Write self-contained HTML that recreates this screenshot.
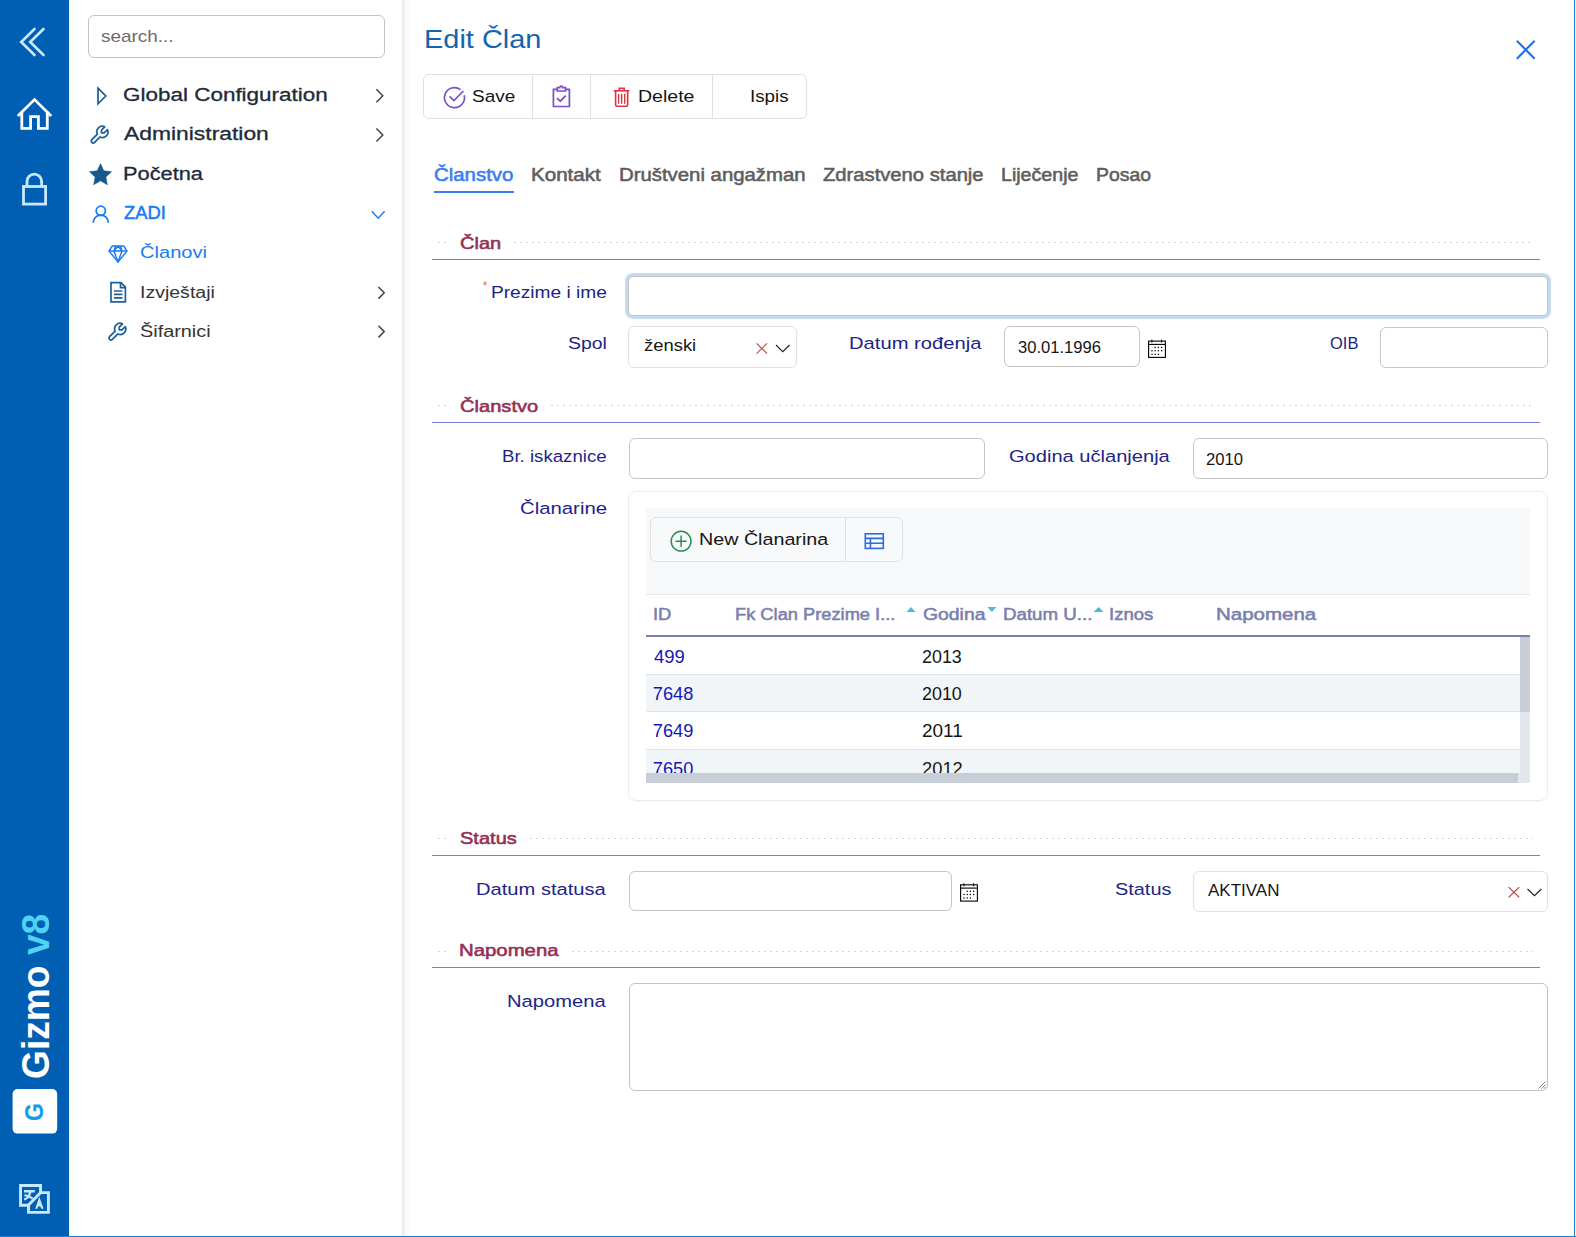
<!DOCTYPE html>
<html><head><meta charset="utf-8"><title>Edit Član</title>
<style>
html,body{margin:0;padding:0;width:1576px;height:1237px;overflow:hidden;background:#fff;font-family:"Liberation Sans",sans-serif;}
.a{position:absolute;box-sizing:border-box;}
.tx{position:absolute;white-space:nowrap;display:inline-block;transform-origin:0 0;}
svg{position:absolute;overflow:visible;}
.inp{position:absolute;box-sizing:border-box;border:1px solid #c6c6c6;border-radius:6px;background:#fff;}
.sel{position:absolute;box-sizing:border-box;border:1px solid #dde1e7;border-radius:6px;background:#fff;}
.dots{position:absolute;height:1px;background-image:linear-gradient(to right,#d4d4d4 0,#d4d4d4 1.6px,transparent 1.6px);background-size:6px 1px;}
.sline{position:absolute;height:1px;background:#7184cf;left:432px;width:1108px;}
</style></head>
<body>
<!-- rail -->
<div class="a" style="left:0;top:0;width:69px;height:1237px;background:#005eb3"></div>
<svg width="69" height="1237" style="left:0;top:0">
  <g fill="none" stroke="#c9e8fc" stroke-width="2.6" stroke-linecap="round" stroke-linejoin="miter">
    <polyline points="34.5,29 21.2,42 34.5,55"/>
    <polyline points="43.5,29 30.2,42 43.5,55"/>
  </g>
  <g fill="none" stroke="#ffffff" stroke-width="2.8" stroke-linejoin="miter">
    <path d="M17.8 116 L34.5 99.6 L51.2 116"/>
    <path d="M21.8 111.5 V128.3 H30.6 V116.6 H38.4 V128.3 H47.3 V111.5"/>
  </g>
  <g fill="none" stroke="#c9e8fc" stroke-width="2.8">
    <rect x="23.5" y="186.5" width="22.1" height="17.6"/>
    <path d="M27 186.5 V181.5 A7.3 7.3 0 0 1 41.6 181.5 V186.5"/>
  </g>
  <g fill="none" stroke="#c9e8fc" stroke-width="2.9" stroke-linejoin="miter">
    <path d="M28.5 1205.3 H20.55 V1185.45 H40.55 V1192.6"/>
    <path d="M40.55 1192.6 H48.4 V1212.4 H28.5 V1205.3"/>
    <path d="M41.2 1192 L27.8 1205.8"/>
  </g>
  <g fill="#c9e8fc">
    <path d="M24 1189.9 H34.8 V1192.4 H31.3 C31 1194 30.5 1195.2 30 1196 C31.6 1196.5 32.6 1197 33.3 1197.6 L32 1199.5 C31.2 1198.8 30.2 1198.3 29 1197.8 C27.8 1199 26.2 1200 24.3 1200.5 L23.8 1198.4 C25.2 1198 26.3 1197.4 27 1196.8 C26 1196.5 25 1196.3 24.2 1196.2 L24.6 1194.2 C25.9 1194.4 27.1 1194.6 28.2 1195 C28.5 1194.2 28.7 1193.3 28.8 1192.4 H24 Z"/>
    <path d="M39.3 1196.7 L43.6 1208.8 H41.2 L40.4 1206.4 H38.1 L37.4 1208.8 H35.2 Z"/>
  </g>
  <rect x="12.6" y="1089" width="44.6" height="44.6" rx="5" fill="#ffffff"/>
</svg>
<div class="tx" style="left:16px;top:1078.5px;transform:rotate(-90deg) scaleX(0.953);transform-origin:0 0;font-size:39px;line-height:39px;font-weight:700;color:#fff">Gizmo <span style="color:#4fd3f5">v8</span></div>
<div class="tx" style="left:20.9px;top:1121.3px;transform:rotate(-90deg) scaleX(0.87);transform-origin:0 0;font-size:26.6px;line-height:26.6px;font-weight:700;color:#109ee8">G</div>

<!-- sidebar panel -->
<div class="inp" style="left:88px;top:15px;width:296.5px;height:43px;border-color:#c4c4c4"></div>
<svg width="400" height="400" style="left:0;top:0">
  <!-- triangle -->
  <path d="M98 88.2 L105.8 96 L98 103.8 Z" fill="none" stroke="#1c5f94" stroke-width="1.7" stroke-linejoin="miter"/>
  <!-- wrench -->
  <g transform="translate(88.6,123.6) scale(0.92)" fill="none" stroke="#1f5f9a" stroke-width="1.9" stroke-linejoin="round" stroke-linecap="round">
    <path d="M17 10 h-3 v-3 l3.5 -3.5 a6 6 0 0 0 -8 8 l-6 6 a2 2 0 0 0 3 3 l6 -6 a6 6 0 0 0 8 -8 l-3.5 3.5"/>
  </g>
  <!-- star -->
  <path d="M100.50,163.70 L103.77,170.80 L111.53,171.72 L105.80,177.02 L107.32,184.68 L100.50,180.87 L93.68,184.68 L95.20,177.02 L89.47,171.72 L97.23,170.80 Z" fill="#17598c" stroke="#17598c" stroke-width="0.6" stroke-linejoin="round"/>
  <!-- user -->
  <g fill="none" stroke="#1a7cf2" stroke-width="1.8">
    <circle cx="100.8" cy="210.8" r="4.6"/>
    <path d="M93.2 222.8 A7.6 7.6 0 0 1 108.4 222.8"/>
  </g>
  <!-- diamond -->
  <g fill="none" stroke="#1a7cf2" stroke-width="1.4" stroke-linejoin="round">
    <path d="M112.3 246 H123.7 L127 251 L118 262 L109 251 Z"/>
    <path d="M109 251 H127 M115.5 246 L114 251 L118 262 L122 251 L120.5 246 M118 246 L114 251 M118 246 L122 251"/>
  </g>
  <!-- doc -->
  <g fill="none" stroke="#1f5f9a" stroke-width="1.7" stroke-linejoin="miter">
    <path d="M111 282.7 H121 L125.4 287.2 V301.8 H111 Z"/>
    <path d="M120.5 282.7 V287.7 H125.4"/>
    <path d="M114 291 H122.5 M114 294.4 H122.5 M114 297.8 H122.5"/>
  </g>
  <!-- wrench 2 -->
  <g transform="translate(106.4,320.6) scale(0.92)" fill="none" stroke="#1f5f9a" stroke-width="1.9" stroke-linejoin="round" stroke-linecap="round">
    <path d="M17 10 h-3 v-3 l3.5 -3.5 a6 6 0 0 0 -8 8 l-6 6 a2 2 0 0 0 3 3 l6 -6 a6 6 0 0 0 8 -8 l-3.5 3.5"/>
  </g>
  <!-- chevrons -->
  <g fill="none" stroke="#444" stroke-width="1.5">
    <polyline points="376.4,89.3 382.8,95.8 376.4,102.3"/>
    <polyline points="376.4,128.5 382.8,135 376.4,141.5"/>
    <polyline points="378.5,287 384.2,292.8 378.5,298.6"/>
    <polyline points="378.5,325.8 384.2,331.6 378.5,337.4"/>
  </g>
  <polyline points="371.8,211.2 378.2,218.2 384.6,211.2" fill="none" stroke="#1a7cf2" stroke-width="1.5"/>
</svg>

<!-- main panel shadow -->
<div class="a" style="left:402px;top:0;width:10px;height:1237px;background:linear-gradient(to right,#e4e6ea 0,#f2f3f5 2px,#fafafb 5px,#fff 10px)"></div>
<div class="a" style="left:0;top:1235.5px;width:1576px;height:1.5px;background:#1a7fd8"></div>
<div class="a" style="left:1574px;top:0;width:1.2px;height:1237px;background:#1a80d6"></div>

<!-- close -->
<svg width="40" height="40" style="left:1510px;top:34px">
  <path d="M6.8 6.8 L24.7 24.7 M24.7 6.8 L6.8 24.7" stroke="#1570f5" stroke-width="2" fill="none"/>
</svg>

<!-- toolbar -->
<div class="a" style="left:423.4px;top:74.2px;width:383.5px;height:44.8px;border:1px solid #dde0e6;border-radius:6px"></div>
<div class="a" style="left:532px;top:75px;width:1px;height:43.3px;background:#dde0e6"></div>
<div class="a" style="left:590.3px;top:75px;width:1px;height:43.3px;background:#dde0e6"></div>
<div class="a" style="left:711.5px;top:75px;width:1px;height:43.3px;background:#dde0e6"></div>
<svg width="800" height="130" style="left:0;top:0">
  <g fill="none" stroke="#7a4fc8" stroke-width="1.7">
    <path d="M464.2 95.2 A10 10 0 1 1 460.5 89.6"/>
    <path d="M449.6 96.4 L453.9 100.6 L463.4 91"/>
  </g>
  <g fill="none" stroke="#7a4fc8" stroke-width="1.7">
    <path d="M557.3 89.3 H553.4 V106.5 H569.4 V89.3 H565.6"/>
    <path d="M557.3 91 V87.6 H559.8 A1.4 1.4 0 0 1 562.6 87.6 H565.6 V91 Z"/>
    <path d="M557 98.2 L560.3 101.2 L565.8 95.6"/>
  </g>
  <g fill="none" stroke="#dc3545" stroke-width="1.6">
    <path d="M613.8 90.8 H629.4"/>
    <path d="M619.2 90.5 V88.3 H624.2 V90.5"/>
    <path d="M615.6 91 V104.6 Q615.6 106.3 617.3 106.3 H626 Q627.7 106.3 627.7 104.6 V91"/>
    <path d="M618.6 93.8 V103.8 M621.65 93.8 V103.8 M624.7 93.8 V103.8" stroke-width="1.4"/>
  </g>
</svg>
<div class="a" style="left:434px;top:190.8px;width:80px;height:2.4px;background:#3b7cf0"></div>

<!-- section lines -->
<div class="dots" style="left:438px;top:242px;width:10px"></div>
<div class="dots" style="left:514px;top:242px;width:1019px"></div>
<div class="sline" style="top:259px"></div>
<div class="dots" style="left:438px;top:405px;width:10px"></div>
<div class="dots" style="left:551px;top:405px;width:982px"></div>
<div class="sline" style="top:422px"></div>
<div class="dots" style="left:438px;top:838px;width:10px"></div>
<div class="dots" style="left:530px;top:838px;width:1003px"></div>
<div class="sline" style="top:855px"></div>
<div class="dots" style="left:438px;top:950.5px;width:10px"></div>
<div class="dots" style="left:572px;top:950.5px;width:961px"></div>
<div class="sline" style="top:967px"></div>

<!-- asterisk -->
<div class="tx" style="left:482.8px;top:280px;font-size:12px;line-height:12px;color:#f06262">*</div>

<!-- inputs -->
<div class="inp" style="left:628.3px;top:275.5px;width:920px;height:40.5px;border-color:#c2c2c2;border-radius:5px;box-shadow:0 0 0 3px #c6daf2"></div>
<div class="sel" style="left:628.3px;top:326.3px;width:168.5px;height:41.5px"></div>
<div class="inp" style="left:1004px;top:326.3px;width:135.8px;height:41.2px"></div>
<div class="inp" style="left:1380.2px;top:326.5px;width:168px;height:41px"></div>
<div class="inp" style="left:628.5px;top:437.9px;width:356.3px;height:41.6px"></div>
<div class="inp" style="left:1192.5px;top:437.9px;width:355.7px;height:41.6px"></div>
<div class="inp" style="left:628.5px;top:871.3px;width:323.5px;height:40px"></div>
<div class="sel" style="left:1192.5px;top:871.3px;width:355.2px;height:41px"></div>
<svg width="1600" height="1000" style="left:0;top:0">
  <path d="M756.6 343.3 L767 353.6 M767 343.3 L756.6 353.6" stroke="#cc4a3c" stroke-width="1.15" fill="none"/>
  <polyline points="776,345 782.8,351.6 789.6,345" stroke="#222" stroke-width="1.15" fill="none"/>
  <path d="M1508.6 887.1 L1519.3 897.3 M1519.3 887.1 L1508.6 897.3" stroke="#c0392b" stroke-width="1.15" fill="none"/>
  <polyline points="1527.5,889 1534.5,895.7 1541.4,889" stroke="#222" stroke-width="1.15" fill="none"/>
</svg>
<div class="inp" style="left:628.5px;top:983px;width:919.5px;height:107.5px;border-color:#c4c4c4;border-radius:6px"></div>
<svg width="20" height="20" style="left:1530px;top:1072px">
  <path d="M15.6 9.4 L8.4 16.6 M15.6 12.4 L11.4 16.6 M15.6 15 L14 16.6" stroke="#8a8a8a" stroke-width="1" fill="none"/>
</svg>

<!-- calendars -->
<svg width="1200" height="1000" style="left:0;top:0">
  <g transform="translate(0,0)">
    <g fill="none" stroke="#000" stroke-width="1.1">
      <rect x="1148.6" y="341.1" width="16.8" height="16.3"/>
      <path d="M1148.6 344.4 H1165.4"/>
      <path d="M1151.9 339.6 V342.6 M1161.6 339.6 V342.6" stroke-width="1"/>
    </g>
    <g fill="#000"><circle cx="1155.2" cy="347.6" r="0.75"/><circle cx="1158.4" cy="347.6" r="0.75"/><circle cx="1161.6" cy="347.6" r="0.75"/><circle cx="1152" cy="350.8" r="0.75"/><circle cx="1155.2" cy="350.8" r="0.75"/><circle cx="1158.4" cy="350.8" r="0.75"/><circle cx="1161.6" cy="350.8" r="0.75"/><circle cx="1152" cy="354.2" r="0.75"/><circle cx="1155.2" cy="354.2" r="0.75"/><circle cx="1158.4" cy="354.2" r="0.75"/></g>
  </g>
  <g transform="translate(-188,543.7)">
    <g fill="none" stroke="#000" stroke-width="1.1">
      <rect x="1148.6" y="341.1" width="16.8" height="16.3"/>
      <path d="M1148.6 344.4 H1165.4"/>
      <path d="M1151.9 339.6 V342.6 M1161.6 339.6 V342.6" stroke-width="1"/>
    </g>
    <g fill="#000"><circle cx="1155.2" cy="347.6" r="0.75"/><circle cx="1158.4" cy="347.6" r="0.75"/><circle cx="1161.6" cy="347.6" r="0.75"/><circle cx="1152" cy="350.8" r="0.75"/><circle cx="1155.2" cy="350.8" r="0.75"/><circle cx="1158.4" cy="350.8" r="0.75"/><circle cx="1161.6" cy="350.8" r="0.75"/><circle cx="1152" cy="354.2" r="0.75"/><circle cx="1155.2" cy="354.2" r="0.75"/><circle cx="1158.4" cy="354.2" r="0.75"/></g>
  </g>
</svg>

<!-- clanarine grid -->
<div class="a" style="left:627.8px;top:490.6px;width:920px;height:310px;border:1px solid #ececef;border-radius:8px;box-shadow:0 1px 2px rgba(0,0,0,0.03)"></div>
<div class="a" style="left:646px;top:508px;width:883.5px;height:86.5px;background:#f7f8fa;border-bottom:1px solid #e2e5ea"></div>
<div class="a" style="left:649.9px;top:517.3px;width:253.5px;height:44.3px;border:1px solid #dfe1e6;border-radius:6px;background:#f8f9fb"></div>
<div class="a" style="left:845.3px;top:518px;width:1px;height:43px;background:#d9dadc"></div>
<svg width="1000" height="800" style="left:0;top:0">
  <circle cx="681.1" cy="541.2" r="9.9" fill="none" stroke="#2e8b57" stroke-width="1.5"/>
  <path d="M681.1 535.6 V546.8 M675.5 541.2 H686.7" stroke="#2e8b57" stroke-width="1.5"/>
  <g fill="none" stroke="#2a6be0" stroke-width="1.6">
    <rect x="865.3" y="533.8" width="18" height="14.6"/>
    <path d="M865.3 538.4 H883.3 M865.3 543.3 H883.3 M870.4 538.4 V548.4"/>
  </g>
  <path d="M906.6 612 L911 607 L915.5 612 Z" fill="#4fb6d9"/>
  <path d="M987.4 607 L991.9 612 L996.3 607 Z" fill="#4fb6d9"/>
  <path d="M1093.5 612 L1098.6 607 L1103.7 612 Z" fill="#4fb6d9"/>
</svg>
<div class="a" style="left:646px;top:635px;width:883.5px;height:2px;background:#7a80ad"></div>
<div class="a" style="left:646px;top:674px;width:874px;height:37.8px;background:#f2f5f8;border-top:1px solid #e0e4ea;border-bottom:1px solid #e0e4ea"></div>
<div class="a" style="left:646px;top:748.8px;width:874px;height:25px;background:#f2f5f8;border-top:1px solid #e0e4ea"></div>
<span class="tx" id="t0" style="left:101.20px;top:27.51px;font-size:17px;line-height:17px;color:#6b6b6b;font-weight:400;transform:scaleX(1.1141);">search...</span>
<span class="tx" id="t1" style="left:123.40px;top:85.98px;font-size:18.8px;line-height:18.8px;color:#1e2a38;font-weight:400;transform:scaleX(1.1960);-webkit-text-stroke:0.3px #1e2a38;">Global Configuration</span>
<span class="tx" id="t2" style="left:124.20px;top:125.38px;font-size:18.8px;line-height:18.8px;color:#1e2a38;font-weight:400;transform:scaleX(1.2168);-webkit-text-stroke:0.3px #1e2a38;">Administration</span>
<span class="tx" id="t3" style="left:123.20px;top:165.28px;font-size:18.8px;line-height:18.8px;color:#1e2a38;font-weight:400;transform:scaleX(1.1607);-webkit-text-stroke:0.3px #1e2a38;">Početna</span>
<span class="tx" id="t4" style="left:124.20px;top:203.63px;font-size:18.8px;line-height:18.8px;color:#1a7cf2;font-weight:400;transform:scaleX(0.9770);-webkit-text-stroke:0.55px #1a7cf2;">ZADI</span>
<span class="tx" id="t5" style="left:139.60px;top:244.45px;font-size:17.3px;line-height:17.3px;color:#1a7cf2;font-weight:400;transform:scaleX(1.1625);">Članovi</span>
<span class="tx" id="t6" style="left:139.60px;top:283.85px;font-size:17.3px;line-height:17.3px;color:#333333;font-weight:400;transform:scaleX(1.1291);">Izvještaji</span>
<span class="tx" id="t7" style="left:139.60px;top:323.25px;font-size:17.3px;line-height:17.3px;color:#333333;font-weight:400;transform:scaleX(1.1487);">Šifarnici</span>
<span class="tx" id="t8" style="left:423.80px;top:25.86px;font-size:26.5px;line-height:26.5px;color:#1464b0;font-weight:400;transform:scaleX(1.0921);">Edit Član</span>
<span class="tx" id="t9" style="left:472.20px;top:88.27px;font-size:17.4px;line-height:17.4px;color:#151515;font-weight:400;transform:scaleX(1.0898);">Save</span>
<span class="tx" id="t10" style="left:638.20px;top:88.27px;font-size:17.4px;line-height:17.4px;color:#151515;font-weight:400;transform:scaleX(1.1220);">Delete</span>
<span class="tx" id="t11" style="left:749.80px;top:88.27px;font-size:17.4px;line-height:17.4px;color:#151515;font-weight:400;transform:scaleX(1.0793);">Ispis</span>
<span class="tx" id="t12" style="left:434.20px;top:165.56px;font-size:18.3px;line-height:18.3px;color:#3b7cf0;font-weight:400;transform:scaleX(1.1162);-webkit-text-stroke:0.55px #3b7cf0;">Članstvo</span>
<span class="tx" id="t13" style="left:530.60px;top:165.56px;font-size:18.3px;line-height:18.3px;color:#5e5e5e;font-weight:400;transform:scaleX(1.1258);-webkit-text-stroke:0.55px #5e5e5e;">Kontakt</span>
<span class="tx" id="t14" style="left:618.60px;top:165.56px;font-size:18.3px;line-height:18.3px;color:#5e5e5e;font-weight:400;transform:scaleX(1.1129);-webkit-text-stroke:0.55px #5e5e5e;">Društveni angažman</span>
<span class="tx" id="t15" style="left:823.40px;top:165.56px;font-size:18.3px;line-height:18.3px;color:#5e5e5e;font-weight:400;transform:scaleX(1.1051);-webkit-text-stroke:0.55px #5e5e5e;">Zdrastveno stanje</span>
<span class="tx" id="t16" style="left:1000.60px;top:165.56px;font-size:18.3px;line-height:18.3px;color:#5e5e5e;font-weight:400;transform:scaleX(1.0725);-webkit-text-stroke:0.55px #5e5e5e;">Liječenje</span>
<span class="tx" id="t17" style="left:1095.60px;top:165.56px;font-size:18.3px;line-height:18.3px;color:#5e5e5e;font-weight:400;transform:scaleX(1.0609);-webkit-text-stroke:0.55px #5e5e5e;">Posao</span>
<span class="tx" id="t18" style="left:460.00px;top:234.98px;font-size:16.5px;line-height:16.5px;color:#943054;font-weight:400;transform:scaleX(1.2139);-webkit-text-stroke:0.55px #943054;">Član</span>
<span class="tx" id="t19" style="left:460.00px;top:397.98px;font-size:16.5px;line-height:16.5px;color:#943054;font-weight:400;transform:scaleX(1.2181);-webkit-text-stroke:0.55px #943054;">Članstvo</span>
<span class="tx" id="t20" style="left:460.00px;top:829.78px;font-size:16.5px;line-height:16.5px;color:#943054;font-weight:400;transform:scaleX(1.2145);-webkit-text-stroke:0.55px #943054;">Status</span>
<span class="tx" id="t21" style="left:459.00px;top:941.98px;font-size:16.5px;line-height:16.5px;color:#943054;font-weight:400;transform:scaleX(1.2337);-webkit-text-stroke:0.55px #943054;">Napomena</span>
<span class="tx" id="t22" style="left:491.20px;top:284.37px;font-size:17.4px;line-height:17.4px;color:#1c2488;font-weight:400;transform:scaleX(1.0994);">Prezime i ime</span>
<span class="tx" id="t23" style="left:568.00px;top:335.47px;font-size:17.4px;line-height:17.4px;color:#1c2488;font-weight:400;transform:scaleX(1.1150);">Spol</span>
<span class="tx" id="t24" style="left:849.40px;top:335.47px;font-size:17.4px;line-height:17.4px;color:#1c2488;font-weight:400;transform:scaleX(1.1606);">Datum rođenja</span>
<span class="tx" id="t25" style="left:1329.60px;top:335.47px;font-size:17.4px;line-height:17.4px;color:#1c2488;font-weight:400;transform:scaleX(0.9475);">OIB</span>
<span class="tx" id="t26" style="left:502.20px;top:447.77px;font-size:17.4px;line-height:17.4px;color:#1c2488;font-weight:400;transform:scaleX(1.0715);">Br. iskaznice</span>
<span class="tx" id="t27" style="left:1009.20px;top:447.57px;font-size:17.4px;line-height:17.4px;color:#1c2488;font-weight:400;transform:scaleX(1.1549);">Godina učlanjenja</span>
<span class="tx" id="t28" style="left:519.80px;top:499.57px;font-size:17.4px;line-height:17.4px;color:#1c2488;font-weight:400;transform:scaleX(1.1689);">Članarine</span>
<span class="tx" id="t29" style="left:476.00px;top:880.97px;font-size:17.4px;line-height:17.4px;color:#1c2488;font-weight:400;transform:scaleX(1.1576);">Datum statusa</span>
<span class="tx" id="t30" style="left:1114.60px;top:881.47px;font-size:17.4px;line-height:17.4px;color:#1c2488;font-weight:400;transform:scaleX(1.1441);">Status</span>
<span class="tx" id="t31" style="left:507.20px;top:993.17px;font-size:17.4px;line-height:17.4px;color:#1c2488;font-weight:400;transform:scaleX(1.1589);">Napomena</span>
<span class="tx" id="t32" style="left:644.00px;top:337.37px;font-size:17.4px;line-height:17.4px;color:#151515;font-weight:400;transform:scaleX(1.0589);">ženski</span>
<span class="tx" id="t33" style="left:1018.20px;top:338.67px;font-size:17.4px;line-height:17.4px;color:#151515;font-weight:400;transform:scaleX(0.9535);">30.01.1996</span>
<span class="tx" id="t34" style="left:1205.80px;top:450.57px;font-size:17.4px;line-height:17.4px;color:#151515;font-weight:400;transform:scaleX(0.9567);">2010</span>
<span class="tx" id="t35" style="left:1208.20px;top:882.17px;font-size:17.4px;line-height:17.4px;color:#151515;font-weight:400;transform:scaleX(0.9764);">AKTIVAN</span>
<span class="tx" id="t36" style="left:698.60px;top:530.87px;font-size:17.4px;line-height:17.4px;color:#151515;font-weight:400;transform:scaleX(1.1327);">New Članarina</span>
<span class="tx" id="t37" style="left:652.80px;top:606.32px;font-size:17.4px;line-height:17.4px;color:#7a80ad;font-weight:400;transform:scaleX(1.0556);-webkit-text-stroke:0.55px #7a80ad;">ID</span>
<span class="tx" id="t38" style="left:734.80px;top:606.32px;font-size:17.4px;line-height:17.4px;color:#7a80ad;font-weight:400;transform:scaleX(1.0506);-webkit-text-stroke:0.55px #7a80ad;">Fk Clan Prezime I...</span>
<span class="tx" id="t39" style="left:923.40px;top:606.32px;font-size:17.4px;line-height:17.4px;color:#7a80ad;font-weight:400;transform:scaleX(1.1131);-webkit-text-stroke:0.55px #7a80ad;">Godina</span>
<span class="tx" id="t40" style="left:1003.20px;top:606.32px;font-size:17.4px;line-height:17.4px;color:#7a80ad;font-weight:400;transform:scaleX(1.0758);-webkit-text-stroke:0.55px #7a80ad;">Datum U...</span>
<span class="tx" id="t41" style="left:1109.00px;top:606.32px;font-size:17.4px;line-height:17.4px;color:#7a80ad;font-weight:400;transform:scaleX(1.0630);-webkit-text-stroke:0.55px #7a80ad;">Iznos</span>
<span class="tx" id="t42" style="left:1215.60px;top:606.32px;font-size:17.4px;line-height:17.4px;color:#7a80ad;font-weight:400;transform:scaleX(1.1777);-webkit-text-stroke:0.55px #7a80ad;">Napomena</span>
<span class="tx" id="t43" style="left:653.80px;top:647.99px;font-size:18.2px;line-height:18.2px;color:#1414bc;font-weight:400;transform:scaleX(1.0143);">499</span>
<span class="tx" id="t44" style="left:922.40px;top:647.99px;font-size:18.2px;line-height:18.2px;color:#151515;font-weight:400;transform:scaleX(0.9834);">2013</span>
<span class="tx" id="t45" style="left:652.80px;top:685.09px;font-size:18.2px;line-height:18.2px;color:#1414bc;font-weight:400;">7648</span>
<span class="tx" id="t46" style="left:922.40px;top:685.09px;font-size:18.2px;line-height:18.2px;color:#151515;font-weight:400;transform:scaleX(0.9834);">2010</span>
<span class="tx" id="t47" style="left:652.80px;top:722.39px;font-size:18.2px;line-height:18.2px;color:#1414bc;font-weight:400;">7649</span>
<span class="tx" id="t48" style="left:922.40px;top:722.39px;font-size:18.2px;line-height:18.2px;color:#151515;font-weight:400;transform:scaleX(1.0436);">2011</span>
<span class="tx" id="t49" style="left:652.80px;top:759.69px;font-size:18.2px;line-height:18.2px;color:#1414bc;font-weight:400;">7650</span>
<span class="tx" id="t50" style="left:922.40px;top:759.69px;font-size:18.2px;line-height:18.2px;color:#151515;font-weight:400;transform:scaleX(1.0086);">2012</span>
<div class="a" style="left:646px;top:773px;width:883.5px;height:10px;background:#fff"></div>
<div class="a" style="left:1520px;top:637px;width:9.5px;height:146px;background:#e3e7ed"></div>
<div class="a" style="left:1517.8px;top:773px;width:11.7px;height:10px;background:#e3e7ed"></div>
<div class="a" style="left:1520px;top:637px;width:9.5px;height:75px;background:#c8ced7"></div>
<div class="a" style="left:646px;top:773px;width:871.8px;height:9.6px;background:#c8ced7"></div>
</body></html>
